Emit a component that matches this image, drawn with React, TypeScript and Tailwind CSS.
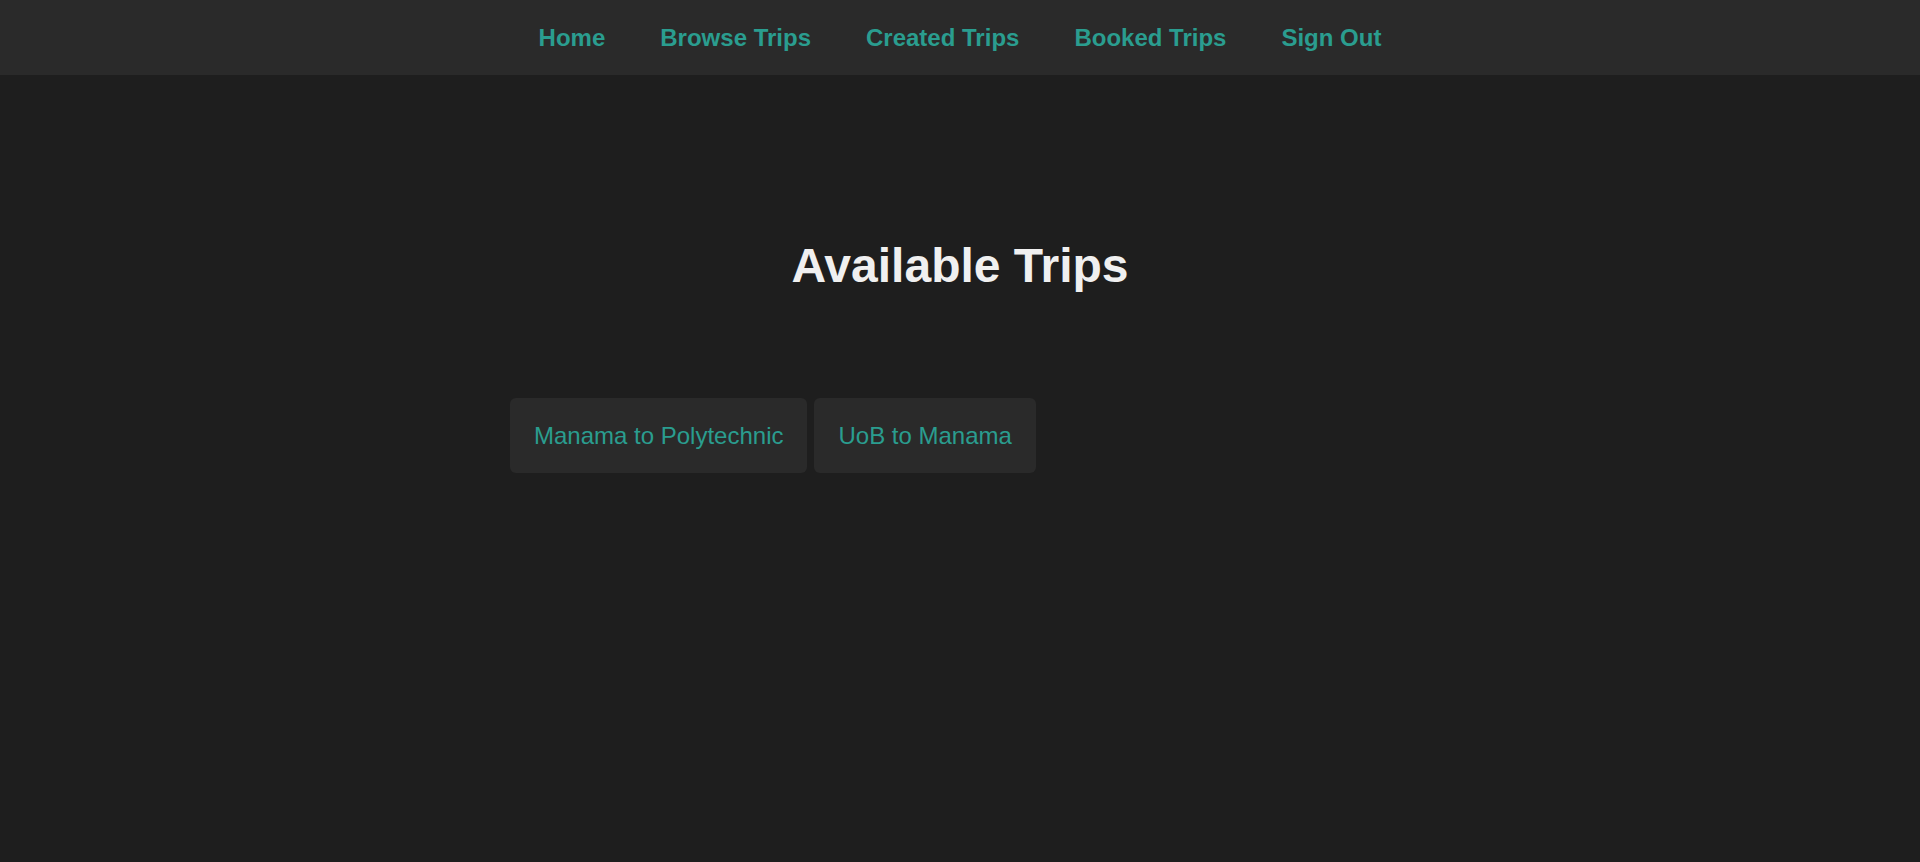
import React from "react";

export default function App() {
  const links = ["Home", "Browse Trips", "Created Trips", "Booked Trips", "Sign Out"];
  const trips = ["Manama to Polytechnic", "UoB to Manama"];
  return (
    <div
      className="min-h-[862px] bg-[#1e1e1e]"
      style={{ fontFamily: '"Liberation Sans", Arial, sans-serif' }}
    >
      <nav className="h-[75px] bg-[#2a2a2a] flex items-center justify-center gap-[55px]">
        {links.map((l) => (
          <a key={l} href="#" className="text-[24px] font-bold leading-[27px] text-[#2a9d8f]">
            {l}
          </a>
        ))}
      </nav>
      <main className="max-w-[900px] mx-auto">
        <h1 className="mt-[164px] text-center text-[48px] font-bold leading-[54px] text-[#f0f0f0]">
          Available Trips
        </h1>
        <div className="mt-[105px] flex flex-wrap gap-[7px]">
          {trips.map((t) => (
            <a
              key={t}
              href="#"
              className="block bg-[#2a2a2a] rounded-[6px] p-[24px] text-[24px] leading-[27px] text-[#2a9d8f]"
            >
              {t}
            </a>
          ))}
        </div>
      </main>
    </div>
  );
}
